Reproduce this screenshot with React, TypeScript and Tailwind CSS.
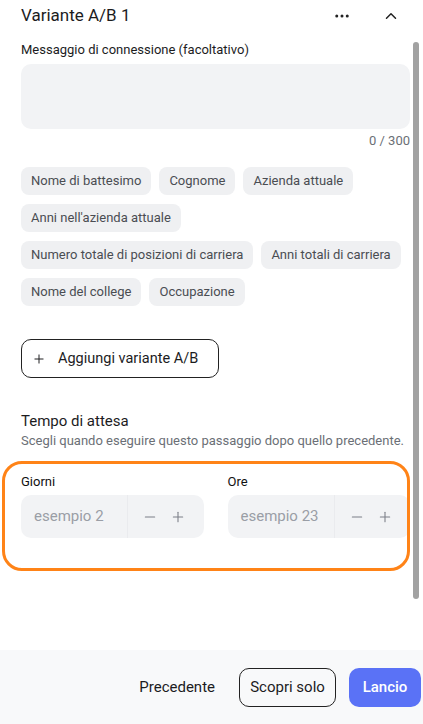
import { ChevronUp, Ellipsis, Minus, Plus } from 'lucide-react';

const chipRows = [
  ['Nome di battesimo', 'Cognome', 'Azienda attuale'],
  ["Anni nell'azienda attuale"],
  ['Numero totale di posizioni di carriera', 'Anni totali di carriera'],
  ['Nome del college', 'Occupazione'],
];

function Stepper({ label, placeholder }: { label: string; placeholder: string }) {
  return (
    <div className="flex flex-col">
      <div className="text-[13px] leading-[18px] text-[#111]">{label}</div>
      <div className="mt-[4px] h-[43px] rounded-[10px] bg-[#f2f3f5] flex items-center">
        <div className="w-[107px] pl-[13px] text-[15px] text-[#9a9ea6] border-r border-[#eaebee] h-full flex items-center whitespace-nowrap">
          {placeholder}
        </div>
        <div className="flex items-center gap-[12px] pl-[14px] text-[#7b7f87]">
          <Minus size={16} strokeWidth={1.6} />
          <Plus size={16} strokeWidth={1.6} />
        </div>
      </div>
    </div>
  );
}

export default function App() {
  return (
    <div className="w-[423px] h-[724px] flex flex-col bg-white text-[#1c1c1e]" style={{ fontFamily: 'Roboto, "Noto Sans", sans-serif' }}>
      <div className="flex-1 relative overflow-hidden">
        {/* scrollbar */}
        <div className="absolute left-[413px] top-[42px] w-[6px] h-[557px] rounded-full bg-[#a2a2a2]" />

        <div className="pl-[21px] pr-[13px]">
          <div className="h-[32px] flex items-center">
            <div className="text-[17px] flex-1">Variante A/B 1</div>
            <Ellipsis size={18} className="mr-[31px] text-[#222]" />
            <ChevronUp size={18} className="mr-[10px] text-[#222]" />
          </div>

          <div className="mt-[9px] text-[13px] leading-[18px] whitespace-nowrap">Messaggio di connessione (facoltativo)</div>
          <div className="mt-[5px] h-[65px] rounded-[10px] bg-[#f2f3f5]" />
          <div className="mt-[3px] text-[13px] leading-[18px] text-right text-[#6b6f76]">0 / 300</div>

          <div className="mt-[17px] flex flex-col gap-[9px]">
            {chipRows.map((row, i) => (
              <div key={i} className="flex gap-2">
                {row.map(c => (
                  <span key={c} className="h-[28px] px-[10px] rounded-[8px] bg-[#eff0f2] text-[13px] text-[#4a4d52] flex items-center whitespace-nowrap">
                    {c}
                  </span>
                ))}
              </div>
            ))}
          </div>

          <button className="mt-[33px] h-[39px] w-[198px] border border-[#222] rounded-[10px] flex items-center gap-[12px] pl-[10px] text-[14.5px] whitespace-nowrap">
            <Plus size={14} strokeWidth={1.7} />
            Aggiungi variante A/B
          </button>

          <div className="mt-[32px] text-[15px] leading-[22px]">Tempo di attesa</div>
          <div className="text-[13px] leading-[18px] text-[#6b6f76] whitespace-nowrap">Scegli quando eseguire questo passaggio dopo quello precedente.</div>

          <div className="relative mt-[23px]">
            {/* highlight ring */}
            <div className="absolute -left-[19px] right-0 -top-[12px] h-[110px] border-[3px] border-[#ff8317] rounded-[20px] pointer-events-none" />
            <div className="grid grid-cols-2 gap-[24px]">
              <Stepper label="Giorni" placeholder="esempio 2" />
              <Stepper label="Ore" placeholder="esempio 23" />
            </div>
          </div>
        </div>
      </div>

      <div className="h-[74px] bg-[#f8f9fa] flex items-center justify-end pr-[2px]">
        <button className="text-[15px] mr-[24px]">Precedente</button>
        <button className="h-[39px] w-[97px] border border-[#222] rounded-[10px] text-[15px] mr-[13px]">Scopri solo</button>
        <button className="h-[39px] w-[72px] rounded-[10px] bg-[#5a72f6] text-white text-[15px] font-medium">Lancio</button>
      </div>
    </div>
  );
}
